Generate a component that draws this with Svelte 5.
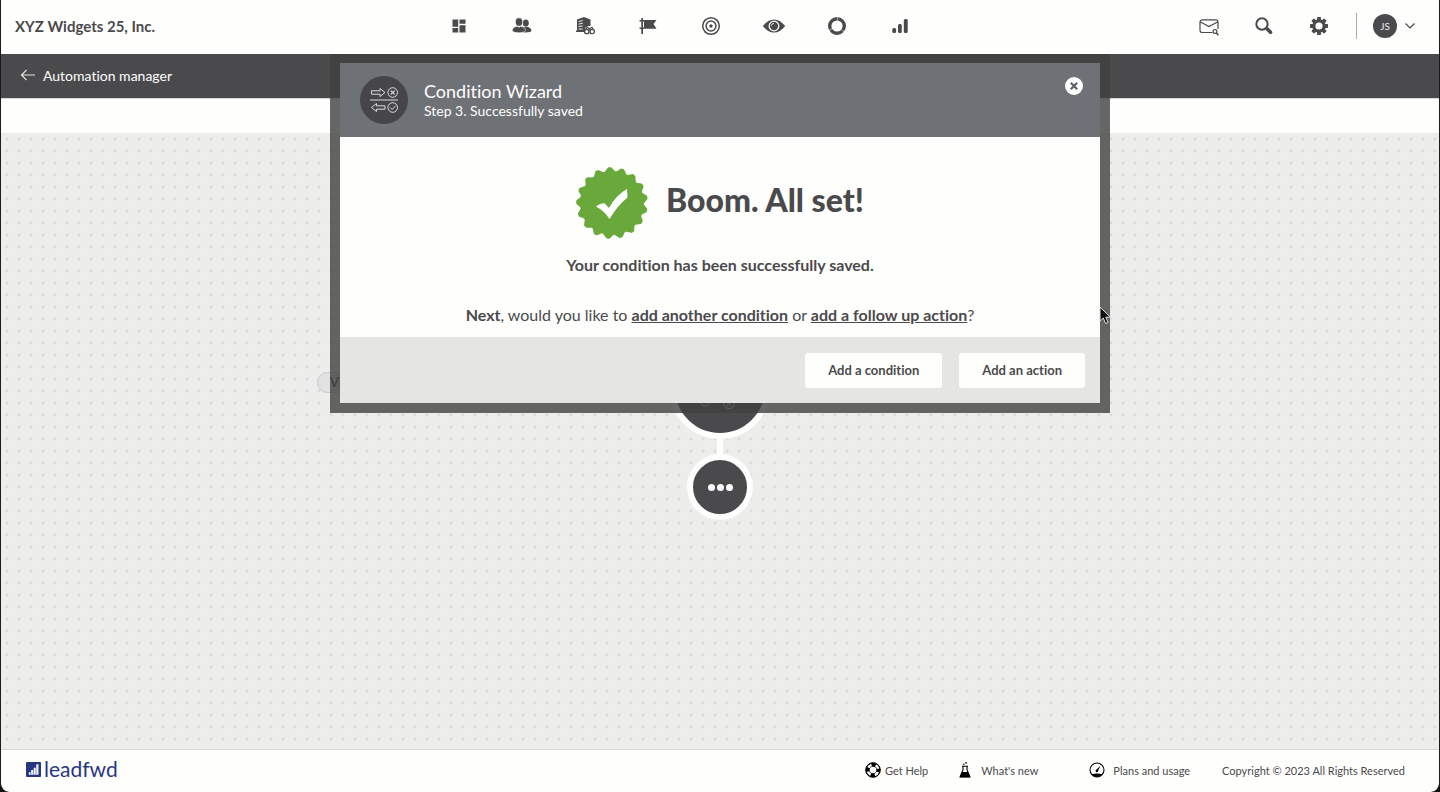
<script>
  const teeth = 17;
  const sealPoints = Array.from({ length: teeth * 4 }, (_, i) => {
    const step = (Math.PI * 2) / (teeth * 4);
    const phase = i % 4;
    const radius = phase < 2 ? 34.8 : 31;
    const angle = -Math.PI / 2 - 0.1 + i * step + (phase === 1 ? -0.03 : phase === 3 ? -0.02 : 0);
    return `${(36 + radius * Math.cos(angle)).toFixed(2)},${(36 + radius * Math.sin(angle)).toFixed(2)}`;
  }).join(' ');
  const gearAngles = [0, 45, 90, 135, 180, 225, 270, 315];
</script>

<div class="app">
  <header class="topbar">
    <div class="brand">XYZ Widgets 25, Inc.</div>
    <nav class="nav" aria-label="Main">
      <a href="#dashboard" aria-label="Dashboard">
        <svg viewBox="0 0 20 20"><path d="M3.5 3.5h5.7v7.2H3.5zM3.5 12h5.7v4.5H3.5zM10.5 3.5h6v4.300h-6zM10.500 9.200h6v7.300h-6z" /></svg>
      </a>
      <a href="#contacts" aria-label="Contacts">
        <svg viewBox="0 0 20 20">
          <ellipse cx="13.8" cy="7" rx="3" ry="3.5" /><path d="M10 16c0-4 1.500-5 3.800-5.300 3.400.1 5.700 1.800 5.700 4.100 0 1.500-6 2-9.500 1.200z" />
          <ellipse cx="7" cy="6" rx="3.700" ry="4.200" stroke="#fefefd" stroke-width=".7" />
          <path d="M.3 14.500c0-2.500 2.200-3.800 4.700-4.200l2 1 2-1c2.600.5 4.400 1.700 4.400 4.200 0 3-13.100 3-13.100 0z" stroke="#fefefd" stroke-width=".6" />
        </svg>
      </a>
      <a href="#companies" aria-label="Companies">
        <svg viewBox="0 0 20 20">
          <path d="M2 3.500 9 1l6.500 2.500V16H1v-1.500h1z" />
          <path d="m3.500 5.600 4.200-1.100M3.500 8.200l4.200-1M3.500 10.600l4.200-.7M3.500 13h4.200" stroke="#fefefd" stroke-width=".9" fill="none" />
          <path d="m10.500 11.500 3-1.500h3l3 1.500 1 6H9z" fill="#fefefd" />
          <g fill="#fefefd" stroke="#4a4a4c" stroke-width="1.300"><path d="m10 14.500 2-3 1.500.5 1 1.500 1-1.500 1.500-.5 2 3" /><circle cx="11.800" cy="15.500" r="2.200" /><circle cx="17.200" cy="15.500" r="2.200" /></g>
        </svg>
      </a>
      <a href="#campaigns" aria-label="Campaigns">
        <svg viewBox="0 0 20 20"><path d="M3.300 2h1.700v16H3.300zM1.500 4h4.500v1.500H1.500zM1.500 11.500h4.500V13H1.500zM6 4H18.500l-3 4 3 4.800H6z" /></svg>
      </a>
      <a href="#goals" aria-label="Goals">
        <svg viewBox="0 0 20 20"><g fill="none" stroke="#4a4a4c" stroke-width="1.500"><circle cx="10" cy="10" r="8.300" /><circle cx="10" cy="10" r="4.900" /></g><circle cx="10" cy="10" r="1.700" /></svg>
      </a>
      <a href="#visitors" aria-label="Visitors">
        <svg class="eye" viewBox="0 0 24 20"><path d="M.8 10C4.500 5.500 8 3.400 12 3.400S19.500 5.500 23.200 10c-3.700 4.500-7.200 6.600-11.200 6.600S4.500 14.500.8 10z" /><circle cx="12" cy="10" r="4.800" fill="none" stroke="#fefefd" stroke-width="1.300" /><path d="M9.600 9.600c.1-1.300 1-2.100 2.200-2.200" fill="none" stroke="#fefefd" /></svg>
      </a>
      <a href="#segments" aria-label="Segments">
        <svg viewBox="0 0 20 20"><circle cx="10" cy="10" r="7.300" fill="none" stroke="#4a4a4c" stroke-width="3.400" /><path d="M10.700 1v3.600M17 15.500l-2.500-1.700M2 14.500l3-1.800" stroke="#fefefd" stroke-width=".6" /></svg>
      </a>
      <a href="#reports" aria-label="Reports">
        <svg viewBox="0 0 20 20"><rect x="2.300" y="12" width="3.800" height="5" rx="1.500" /><rect x="8" y="8" width="3.800" height="9" rx="1.500" /><rect x="13.800" y="3" width="3.900" height="14" rx="1.500" /></svg>
      </a>
    </nav>
    <div class="tools">
      <button aria-label="Mail search">
        <svg viewBox="0 0 20 20" fill="none" stroke="#4a4a4c" stroke-width="1.200"><path d="M13.500 16.500H3.500A2.200 2.200 0 0 1 1 14.300V6a2.200 2.200 0 0 1 2.300-2.200h13.400A2.200 2.200 0 0 1 19 6v7M1.500 6 10 10.500 18.500 6" /><circle cx="16" cy="15.500" r="1.900" /><path d="m17.400 17 2 2.300" stroke-width="1.500" /></svg>
      </button>
      <button aria-label="Search">
        <svg viewBox="0 0 20 20" fill="none" stroke="#4a4a4c"><circle cx="8" cy="8" r="5.700" stroke-width="2" /><path d="m13.500 13.300 3 3" stroke-width="3.600" stroke-linecap="round" /></svg>
      </button>
      <button aria-label="Settings">
        <svg viewBox="0 0 20 20"><circle cx="10" cy="10" r="5.200" fill="none" stroke="#4a4a4c" stroke-width="3.200" />{#each gearAngles as angle}<rect x="8.100" y="1" width="3.800" height="3.400" rx=".6" transform="rotate({angle} 10 10)" />{/each}</svg>
      </button>
      <span class="divider"></span>
      <button class="account" aria-label="Account">
        <span class="avatar">JS</span>
        <svg class="chevron" viewBox="0 0 12 12" fill="none" stroke="#4a4a4c" stroke-width="1.200"><path d="m1.500 3.500 4.500 4.500 4.500-4.500" /></svg>
      </button>
    </div>
  </header>

  <div class="subbar">
    <a href="#automation">
      <svg viewBox="0 0 16 12" fill="none" stroke="#e4e4e4" stroke-width="1.100"><path d="M15 6H1.500M6.500 1l-5 5 5 5" /></svg>
      Automation manager
    </a>
  </div>
  <div class="strip"></div>

  <main class="canvas">
    <div class="pill">Vi</div>
    <div class="flow">
      <div class="node large">
        <svg viewBox="0 0 90 90" fill="none" stroke="#d8d8dc" stroke-width="1"><circle cx="30" cy="58" r="5" /><path d="m27.500 58 2 2 3-3" /><circle cx="54" cy="60" r="5.500" /><path d="m51.500 58 5 5m0-5-5 5" /></svg>
      </div>
      <div class="link"></div>
      <button class="node small" aria-label="More"><i></i><i></i><i></i></button>
    </div>
  </main>

  <footer class="footer">
    <a class="logo" href="#home">
      <svg viewBox="0 0 16 16"><rect width="16" height="16" rx="1" fill="#283583" /><path d="M3 13.500V11h2v2.500zM5.500 13.500V8.500h2.200v5zM8.200 13.500V6h2.200v7.500zM10.900 13.500V2.500h2.400v11z" fill="#f2f3fb" /></svg>
      leadfwd
    </a>
    <div class="links">
      <a class="help" href="#help">
        <svg viewBox="0 0 16 16"><circle cx="8" cy="8" r="5.300" fill="none" stroke="#000" stroke-width="4" /><circle cx="8" cy="8" r="5.300" fill="none" stroke="#fff" stroke-width="2.600" stroke-dasharray="4 4.325" stroke-dashoffset="-2.160" /><circle cx="8" cy="8" r="7.300" fill="none" stroke="#000" /></svg>
        Get Help
      </a>
      <a class="news" href="#news">
        <svg viewBox="0 0 16 16"><path d="M5 4.200h6M6 4.500V8L3.200 14.600h9.600L10 8V4.500" fill="none" stroke="#000" stroke-width="1.100" /><path d="M5 10h6l2.500 5.500h-11z" /><circle cx="6.800" cy="2.200" r=".8" /><circle cx="9" cy=".9" r=".8" /></svg>
        What's new
      </a>
      <a class="plans" href="#plans">
        <svg viewBox="0 0 16 16"><circle cx="8" cy="8" r="7" fill="none" stroke="#000" stroke-width="1.100" /><path d="M2.400 12.200Q8 10.700 13.600 12.200A7 7 0 0 1 2.400 12.200zM11.500 3.700 9.200 8.600a1.300 1.300 0 1 1-1.700-1z" /></svg>
        Plans and usage
      </a>
      <span>Copyright © 2023 All Rights Reserved</span>
    </div>
  </footer>

  <div class="dialog" role="dialog" aria-labelledby="wizard-title">
    <div class="dialog-head">
      <span class="badge">
        <svg viewBox="0 0 32 32" fill="none" stroke="#dcdce0" stroke-width="1"><path d="M2 16h28M3.500 6.800h8.500V4.500L17 8.500l-5 4v-2.300H3.500zM17 21.800H8.500v-2.300l-5 4 5 4v-2.300H17z" /><circle cx="24.700" cy="8.500" r="4.800" /><path d="m22.800 6.600 3.800 3.800m0-3.800-3.800 3.800" stroke-width="1.300" /><circle cx="24.700" cy="23.500" r="4.800" /><path d="m22 23.500 2 2 3.500-3.700" /></svg>
      </span>
      <div class="titles">
        <h2 id="wizard-title">Condition Wizard</h2>
        <p>Step 3. Successfully saved</p>
      </div>
      <button class="close" aria-label="Close"><svg viewBox="0 0 18 18"><circle cx="9" cy="9" r="9" fill="#fff" /><path d="m5.800 5.800 6.400 6.400m0-6.400-6.400 6.400" stroke="#5d6064" stroke-width="2.200" /></svg></button>
    </div>
    <div class="dialog-body">
      <div class="success">
        <svg viewBox="0 0 72 72"><polygon points={sealPoints} fill="#69a93b" stroke="#69a93b" stroke-width="2" stroke-linejoin="round" /><path d="M20 39.500q5-3.500 8.500-3.300L33 41q7-13 18-19l.5 8.500Q42 38 33.500 52q-5-8-13.500-12.500z" fill="#fff" /></svg>
        <h1>Boom. All set!</h1>
      </div>
      <p class="saved">Your condition has been successfully saved.</p>
      <p class="next"><b>Next</b>, would you like to <a href="#condition">add another condition</a> or <a href="#action">add a follow up action</a>?</p>
    </div>
    <div class="dialog-foot">
      <button>Add a condition</button>
      <button>Add an action</button>
    </div>
    <svg class="cursor" viewBox="0 0 14 20"><path d="M1 1v14l3.300-3 2.300 5.500 2.500-1-2.300-5.300h4.500z" fill="#111" stroke="#ddd" /></svg>
  </div>
</div>

<style>
  :global(body) { background: #111; }
  * { box-sizing: border-box; }
  .app {
    position: relative;
    display: flex;
    flex-direction: column;
    min-height: 100vh;
    border: solid #1b1b1b;
    border-width: 0 1px;
    border-radius: 0 0 9px 9px;
    overflow: hidden;
    background: #fefefd;
    color: #4a4a4c;
    font-family: Lato, "Open Sans", sans-serif;
    font-variant-ligatures: none;
  }
  h1, h2, p { margin: 0; }
  a { color: inherit; text-decoration: none; }
  button { border: 0; padding: 0; background: none; color: inherit; font: inherit; cursor: pointer; }
  svg { display: block; flex: none; }
  .topbar {
    position: relative;
    z-index: 3;
    display: grid;
    grid-template-columns: 1fr auto 1fr;
    align-items: center;
    height: 54px;
    padding: 0 23px 2px 14px;
    background: #fefefd;
  }
  .brand { font-size: 15px; font-weight: 700; line-height: 18px; }
  .nav { display: flex; gap: 43px; margin-right: 72px; }
  .nav a { display: flex; justify-content: center; width: 20px; }
  .nav svg { width: 20px; height: 20px; fill: #4a4a4c; }
  .nav .eye { width: 24px; }
  .tools { display: flex; align-items: center; justify-content: flex-end; gap: 35px; }
  .tools svg { width: 20px; height: 20px; }
  .tools button:nth-child(3) svg { fill: #4a4a4c; }
  .divider { width: 1px; height: 26px; margin-right: -19px; margin-left: -8px; background: #aaa; }
  .account { display: flex; align-items: center; gap: 7px; }
  .avatar {
    width: 24px;
    height: 24px;
    border-radius: 50%;
    background: #4a4a4c;
    color: #eee;
    font-size: 10px;
    line-height: 24px;
    text-align: center;
  }
  .tools .chevron { width: 12px; height: 12px; }
  .subbar {
    display: flex;
    align-items: center;
    height: 44px;
    padding: 0 19px 2px;
    background: #4a4a4c;
    color: #fff;
    font-size: 14px;
  }
  .subbar a { display: flex; align-items: center; gap: 7px; }
  .subbar svg { width: 16px; height: 12px; }
  .strip { height: 35px; border-top: 1px solid #d8d8dc; }
  .canvas {
    position: relative;
    flex: 1;
    padding-top: 204px;
    background: #ededec radial-gradient(circle at 6px 6px, #dadbde 1px, transparent 2px) 0 0 / 12px 12px;
  }
  .flow { display: flex; flex-direction: column; align-items: center; }
  .node { border: 6px solid #fefefd; border-radius: 50%; background: #4a4a4c; }
  .large { width: 102px; height: 102px; }
  .link { width: 6px; height: 15px; background: #fefefd; }
  .small { display: flex; align-items: center; justify-content: center; gap: 2px; width: 66px; height: 66px; }
  .small i { width: 7px; height: 7px; border-radius: 50%; background: #fff; }
  .pill {
    position: absolute;
    top: 239px;
    right: calc(50% + 319px);
    width: 84px;
    height: 21px;
    padding-left: 12px;
    border: 1px solid #cbcbcc;
    border-radius: 11px;
    background: #e1e2e3;
    color: #222;
    font-size: 13px;
    line-height: 19px;
  }
  .footer {
    display: flex;
    align-items: center;
    justify-content: space-between;
    height: 43px;
    padding: 0 34px 2px 25px;
    border-top: 1px solid #d8d8d9;
    font-size: 11px;
  }
  .logo { display: flex; align-items: center; gap: 3px; padding-bottom: 2px; color: #283583; font-size: 21px; line-height: 24px; }
  .logo svg { width: 15px; height: 15px; }
  .links, .links a { display: flex; align-items: center; }
  .links svg { width: 16px; height: 16px; }
  .links .help { gap: 4px; margin-right: 29px; }
  .links .news { gap: 8px; margin-right: 51px; }
  .links .plans { gap: 8px; margin-right: 32px; }
  .dialog {
    position: absolute;
    z-index: 2;
    top: 53px;
    left: 50%;
    width: 780px;
    max-width: 100%;
    border: 10px solid rgba(64, 64, 64, 0.8);
    transform: translateX(-50%);
  }
  .dialog-head { display: flex; gap: 16px; height: 74px; padding: 13px 17px 0 20px; background: #6e7175; color: #fff; }
  .badge { display: flex; align-items: center; justify-content: center; width: 48px; height: 48px; border-radius: 50%; background: #45454a; }
  .badge svg { width: 32px; height: 32px; }
  .titles { flex: 1; padding-top: 4px; }
  .titles h2 { font-size: 18px; font-weight: 400; line-height: 22px; }
  .titles p { font-size: 14px; line-height: 18px; }
  .close { align-self: flex-start; padding-top: 1px; }
  .close svg { width: 18px; height: 18px; }
  .dialog-body { height: 200px; padding-top: 30px; background: #fefefd; text-align: center; }
  .success { display: flex; justify-content: center; gap: 18px; height: 72px; }
  .success svg { width: 72px; height: 72px; }
  .success h1 { font-size: 32px; font-weight: 900; line-height: 66px; }
  .saved { padding-top: 15px; font-size: 16px; font-weight: 700; line-height: 22px; }
  .next { padding-top: 28px; font-size: 16px; line-height: 22px; }
  .next a { font-weight: 700; text-decoration: underline; }
  .dialog-foot { display: flex; align-items: center; justify-content: flex-end; gap: 17px; height: 66px; padding: 0 15px; background: #e5e5e4; }
  .dialog-foot button { height: 35px; padding: 0 23px; border-radius: 3px; background: #fefefd; font-size: 13px; font-weight: 700; }
  .cursor { position: absolute; top: 243px; right: -13px; width: 14px; height: 20px; }
</style>
